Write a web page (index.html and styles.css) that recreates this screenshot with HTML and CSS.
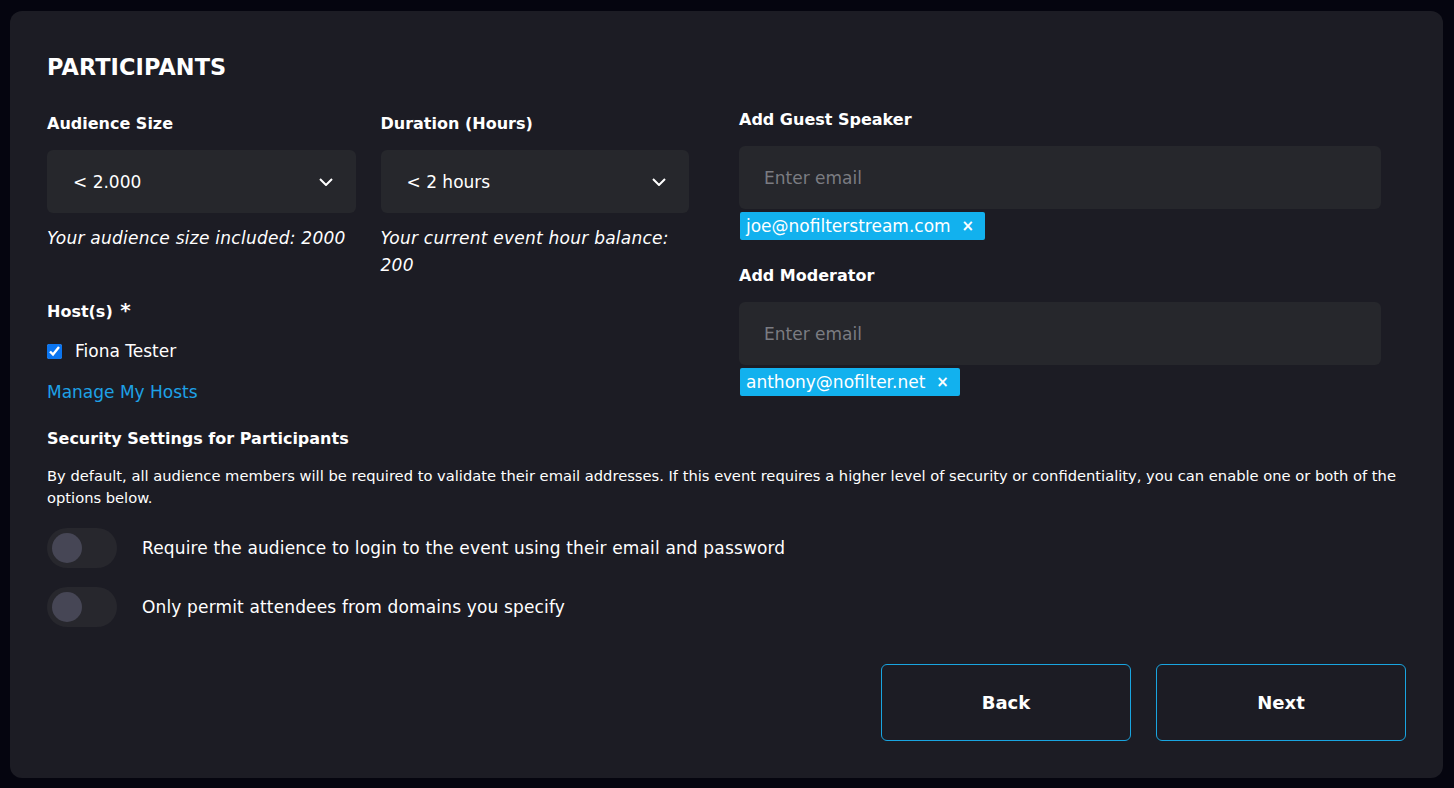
FILE: index.html
```html
<!DOCTYPE html>
<html lang="en">
<head>
<meta charset="utf-8">
<title>Participants</title>
<link rel="stylesheet" href="styles.css">
</head>
<body>
<div class="card">
  <h2 class="title">PARTICIPANTS</h2>
  <div class="form-row">
    <div class="left-col">
      <div class="sub-row">
        <div class="field">
          <div class="label">Audience Size</div>
          <div class="select"><span>&lt; 2.000</span>
            <svg class="chev" width="14" height="8" viewBox="0 0 14 8"><path d="M1 1 L7 7 L13 1" fill="none" stroke="#fff" stroke-width="2"/></svg>
          </div>
          <div class="help">Your audience size included: 2000</div>
        </div>
        <div class="field">
          <div class="label">Duration (Hours)</div>
          <div class="select"><span>&lt; 2 hours</span>
            <svg class="chev" width="14" height="8" viewBox="0 0 14 8"><path d="M1 1 L7 7 L13 1" fill="none" stroke="#fff" stroke-width="2"/></svg>
          </div>
          <div class="help">Your current event hour balance: 200</div>
        </div>
      </div>
      <div class="label host-label">Host(s) <span class="req">*</span></div>
      <label class="check-row"><input type="checkbox" checked class="check"><span>Fiona Tester</span></label>
      <a class="link" href="#">Manage My Hosts</a>
    </div>
    <div class="right-col">
      <div class="label">Add Guest Speaker</div>
      <div class="input">Enter email</div>
      <div class="chips"><span class="chip">joe@nofilterstream.com<span class="x">×</span></span></div>
      <div class="label label-mod">Add Moderator</div>
      <div class="input">Enter email</div>
      <div class="chips"><span class="chip">anthony@nofilter.net<span class="x">×</span></span></div>
    </div>
  </div>
  <div class="label sec-title">Security Settings for Participants</div>
  <p class="para">By default, all audience members will be required to validate their email addresses. If this event requires a higher level of security or confidentiality, you can enable one or both of the options below.</p>
  <div class="toggle-row"><span class="toggle"><span class="knob"></span></span><span>Require the audience to login to the event using their email and password</span></div>
  <div class="toggle-row second"><span class="toggle"><span class="knob"></span></span><span>Only permit attendees from domains you specify</span></div>
  <div class="actions">
    <button class="btn">Back</button>
    <button class="btn">Next</button>
  </div>
</div>
</body>
</html>
```
FILE: styles.css
```css
html, body {
  margin: 0;
  padding: 0;
  background: #05050f;
}
body {
  font-family: "DejaVu Sans", Inter, sans-serif;
  color: #ffffff;
  padding: 11px 11px 10px 10px;
}
.card {
  background: #1c1c24;
  border-radius: 12px;
  height: 767px;
  box-sizing: border-box;
  padding: 41px 37px 37px 37px;
}
.title {
  margin: 0;
  font-size: 22.4px;
  line-height: 30px;
  font-weight: 700;
  letter-spacing: 0.1px;
}
.form-row {
  display: flex;
  gap: 50px;
  margin-top: 25px;
}
.left-col {
  width: 642px;
  padding-top: 5px;
  display: flex;
  flex-direction: column;
  align-items: flex-start;
}
.sub-row {
  display: flex;
  gap: 25px;
  width: 100%;
}
.field {
  flex: 1;
}
.label {
  font-size: 16px;
  line-height: 24px;
  font-weight: 700;
}
.select {
  margin-top: 14px;
  height: 63px;
  background: #26272c;
  border-radius: 6px;
  display: flex;
  align-items: center;
  justify-content: space-between;
  padding: 0 23px 0 26px;
  font-size: 17px;
}
.chev {
  display: block;
}
.help {
  margin-top: 12px;
  font-size: 17px;
  line-height: 27px;
  font-style: italic;
  letter-spacing: 0.25px;
}
.host-label {
  margin-top: 21px;
}
.req {
  font-size: 20px;
  line-height: 0;
  margin-left: 2px;
}
.check-row {
  margin-top: 14px;
  display: flex;
  align-items: center;
  font-size: 17px;
  line-height: 26px;
}
.check {
  width: 15px;
  height: 15px;
  margin: 0 13px 0 0;
  accent-color: #0b75f0;
}
.link {
  margin-top: 15px;
  font-size: 17px;
  line-height: 26px;
  color: #1ea1e6;
  text-decoration: none;
}
.right-col {
  width: 642px;
  padding-top: 1px;
}
.input {
  margin-top: 14px;
  height: 63px;
  background: #26272c;
  border-radius: 6px;
  display: flex;
  align-items: center;
  padding-left: 25px;
  font-size: 17px;
  color: #7b7c82;
}
.chips {
  margin-top: 3px;
  padding-left: 1px;
  display: flex;
}
.chip {
  background: #12b1ee;
  color: #fff;
  height: 28px;
  line-height: 28px;
  font-size: 17px;
  padding: 0 11px 0 6px;
  border-radius: 2px;
  display: flex;
  align-items: center;
}
.x {
  margin-left: 11px;
  font-size: 15px;
  font-weight: 700;
}
.label-mod {
  margin-top: 24px;
}
.sec-title {
  margin-top: 22px;
}
.para {
  margin: 14px 0 0 0;
  font-size: 14.7px;
  line-height: 22px;
}
.toggle-row {
  margin-top: 19px;
  display: flex;
  align-items: center;
  gap: 25px;
  font-size: 17px;
  letter-spacing: 0.15px;
}
.toggle-row.second {
  margin-top: 19px;
}
.toggle {
  width: 70px;
  height: 40px;
  border-radius: 20px;
  background: #27272d;
  display: flex;
  align-items: center;
  padding-left: 5px;
  box-sizing: border-box;
  flex: none;
}
.knob {
  width: 30px;
  height: 30px;
  border-radius: 50%;
  background: #464655;
}
.actions {
  margin-top: 37px;
  display: flex;
  justify-content: flex-end;
  gap: 25px;
}
.btn {
  width: 250px;
  height: 77px;
  background: transparent;
  border: 1px solid #19a5e0;
  border-radius: 6px;
  color: #fff;
  font-family: inherit;
  font-size: 18px;
  font-weight: 700;
}
```
